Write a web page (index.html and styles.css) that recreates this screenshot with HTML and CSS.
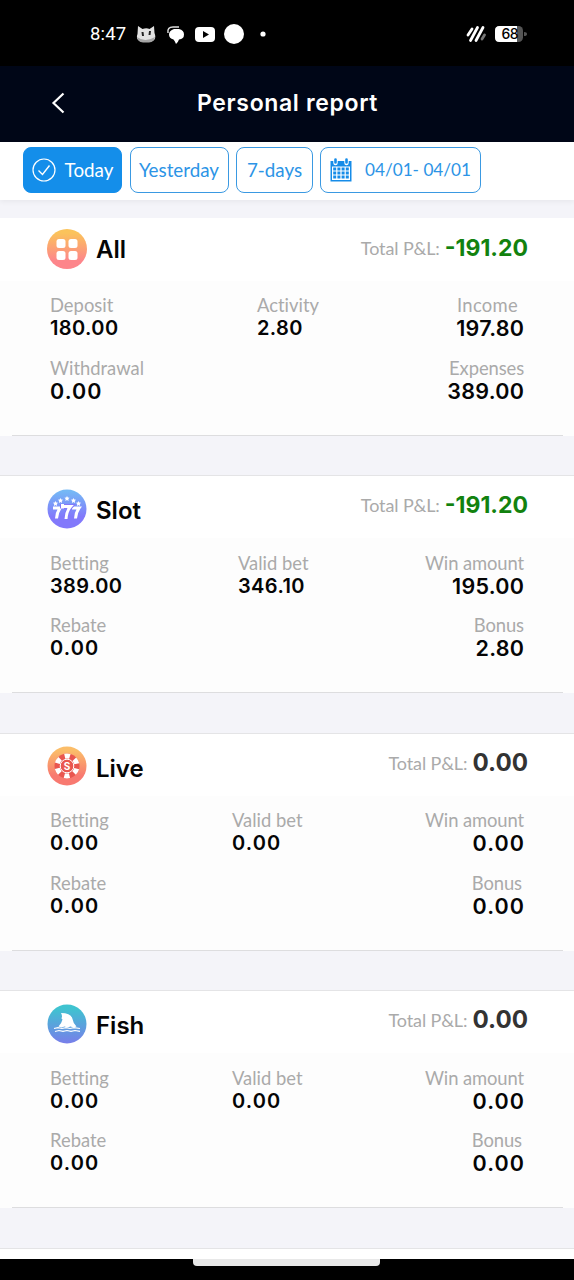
FILE: index.html
```
<!DOCTYPE html>
<html lang="en">
<head>
<meta charset="utf-8">
<title>Personal report</title>
<link rel="stylesheet" href="styles.css">
</head>
<body>
<div class="phone">
  <div class="status">
    <span class="clock">8:47</span>
    <svg class="notices" width="132" height="24" viewBox="0 0 132 24">
      <path d="M2 4l4.500 3q4-1.500 7 0l4.500-3 .5 7q3 8-5 9H7Q-1 19 1.500 12z" fill="#e2e2e2"/>
      <path d="M1 15q8 6 18 0-1 5-6 5.500H7q-5-.5-6-5.500" fill="#a5a5a5"/>
      <path d="M6.500 10l.5 4M14 9l-.5 4" stroke="#222" stroke-width="2"/>
      <path d="M32 11q-1-6 5-6h6" fill="none" stroke="#ddd" stroke-width="1.500"/>
      <path d="M38 7h5q5 1 5 5.500t-5 5q-1 3-3 4.500-1-3-2.500-4.500-4.500-1-4.500-5T38 7" fill="#fff"/>
      <rect x="59" y="5" width="20" height="15" rx="4" fill="#fff"/>
      <path d="M67 9l6 3.500-6 3.500z"/>
      <circle cx="98" cy="12" r="10" fill="#fff"/>
      <circle cx="127" cy="12" r="2.600" fill="#fff"/>
    </svg>
    <svg class="power" width="62" height="20" viewBox="0 0 62 20">
      <g stroke="#fff" stroke-width="2.800" stroke-linecap="round">
        <path d="M2 11l4-6M4.500 16.500l7-13M10 16.500l7-13"/><path d="M16 15l2.500-4" stroke="#777"/>
      </g>
      <rect x="29" y="2" width="28" height="16" rx="4.500" fill="#555"/>
      <path d="M33.500 2H51v16H33.500Q29 18 29 13.500v-7Q29 2 33.500 2" fill="#fff"/>
      <path d="M58 8q3 0 3 2t-3 2z" fill="#555"/>
      <text x="35.500" y="14.800" class="charge">68</text>
    </svg>
  </div>
  <header class="header">
    <svg class="back" width="14" height="22" viewBox="0 0 14 22"><path d="M12.500 1.500L2.500 11l10 9.500" fill="none" stroke="#fff" stroke-width="2.200"/></svg>
    <h1 class="title">Personal report</h1>
  </header>
  <nav class="filters">
    <button class="chip chip-today">
      <svg width="24" height="24" viewBox="0 0 24 24" fill="none" stroke="#fff"><circle cx="12" cy="12" r="11" stroke-width="1.200"/><path d="M6.500 12.500l4 4 7-9" stroke-width="1.400"/></svg>
      <span>Today</span>
    </button>
    <button class="chip chip-yesterday"><span>Yesterday</span></button>
    <button class="chip chip-week"><span>7-days</span></button>
    <button class="chip chip-range">
      <svg width="22" height="24" viewBox="0 0 22 24">
        <path d="M.5 3h21v20.500H.5z" fill="#168ce8"/>
        <path d="M5.500 1v4M16.500 1v4" stroke="#fff" stroke-width="4.400" stroke-linecap="round"/>
        <path d="M5.500 1.500v3M16.500 1.500v3" stroke="#168ce8" stroke-width="2.600" stroke-linecap="round"/>
        <path d="M2 8.500h18V22H2z" fill="#fff"/>
        <path d="M3.200 11h15.600M3.200 15h15.600M3.200 19h15.600" stroke="#168ce8" stroke-width="2.800" stroke-dasharray="3 1.200"/>
      </svg>
      <span>04/01- 04/01</span>
    </button>
  </nav>
  <main class="list">
    <section class="card card-all">
      <div class="head">
        <svg class="badge" width="40" height="40" viewBox="0 0 40 40">
          <defs><linearGradient id="ga" x2="0" y2="1"><stop offset=".1" stop-color="#fbc35b"/><stop offset=".8" stop-color="#fd858b"/></linearGradient></defs>
          <circle cx="20" cy="20" r="20" fill="url(#ga)"/>
          <g fill="#fff"><rect x="9.500" y="10" width="9" height="9" rx="2.500"/><rect x="21.500" y="10" width="9" height="9" rx="2.500"/><rect x="9.500" y="22" width="9" height="9" rx="2.500"/><rect x="21.500" y="22" width="9" height="9" rx="2.500"/></g>
        </svg>
        <h2 class="name">All</h2>
        <p class="total">Total P&amp;L: <b class="sum loss">-191.20</b></p>
      </div>
      <div class="body">
        <div class="cell"><span class="label">Deposit</span><b class="value">180.00</b></div>
        <div class="cell"><span class="label">Activity</span><b class="value">2.80</b></div>
        <div class="cell end"><span class="label label-income">Income</span><b class="value">197.80</b></div>
        <div class="cell wide"><span class="label">Withdrawal</span><b class="value">0.00</b></div>
        <div class="cell end"><span class="label">Expenses</span><b class="value">389.00</b></div>
      </div>
    </section>
    <section class="card card-slot">
      <div class="head">
        <svg class="badge" width="40" height="40" viewBox="0 0 40 40">
          <defs><linearGradient id="gs" x2="0" y2="1"><stop offset=".05" stop-color="#75b8f5"/><stop offset=".7" stop-color="#8279fb"/></linearGradient>
          <path id="star" d="M0-2.600l.8 1.700 1.800.2-1.300 1.300.3 1.900L0 1.600l-1.600.9.300-1.900L-2.600-.7l1.800-.2z"/></defs>
          <circle cx="20" cy="20" r="19.500" fill="url(#gs)"/>
          <g fill="#fff"><use href="#star" x="8.500" y="14.500"/><use href="#star" x="13.500" y="11.500"/><use href="#star" x="20" y="9.500"/><use href="#star" x="26.500" y="11.500"/><use href="#star" x="31.500" y="14.500"/></g>
          <g fill="none" stroke="#fff" stroke-width="3"><path d="M7.500 20.500v-3M7 19h6q-3 4-3.500 10.500M26.500 20.500v-3M26 19h6q-3 4-3.500 10.500"/><path d="M15.500 19.500V15M15 17.500h8.500Q19.500 22 19 30" stroke="#8279fb" stroke-width="5"/><path d="M15.500 19.500V15M15 17.500h8.500Q19.500 22 19 30"/></g>
        </svg>
        <h2 class="name">Slot</h2>
        <p class="total">Total P&amp;L: <b class="sum loss">-191.20</b></p>
      </div>
      <div class="body">
        <div class="cell"><span class="label">Betting</span><b class="value">389.00</b></div>
        <div class="cell"><span class="label">Valid bet</span><b class="value">346.10</b></div>
        <div class="cell end"><span class="label">Win amount</span><b class="value">195.00</b></div>
        <div class="cell wide"><span class="label">Rebate</span><b class="value short">0.00</b></div>
        <div class="cell end"><span class="label">Bonus</span><b class="value">2.80</b></div>
      </div>
    </section>
    <section class="card card-live">
      <div class="head">
        <svg class="badge" width="40" height="40" viewBox="0 0 40 40">
          <defs><linearGradient id="gl" x2="0" y2="1"><stop offset=".1" stop-color="#fbbd69"/><stop offset=".75" stop-color="#f87970"/></linearGradient></defs>
          <circle cx="20" cy="20" r="19.500" fill="url(#gl)"/>
          <circle cx="20" cy="20" r="12.500" fill="#e9564f"/>
          <circle cx="20" cy="20" r="10" fill="none" stroke="#fff" stroke-width="5" stroke-dasharray="5.240 5.232" stroke-dashoffset="-2.600"/>
          <circle cx="20" cy="20" r="6.800" fill="#e9564f" stroke="#fff" stroke-width="1"/>
          <text x="20" y="23.600" class="chip-mark">S</text>
        </svg>
        <h2 class="name">Live</h2>
        <p class="total">Total P&amp;L: <b class="sum">0.00</b></p>
      </div>
      <div class="body">
        <div class="cell"><span class="label">Betting</span><b class="value short">0.00</b></div>
        <div class="cell"><span class="label">Valid bet</span><b class="value short">0.00</b></div>
        <div class="cell end"><span class="label">Win amount</span><b class="value short">0.00</b></div>
        <div class="cell wide"><span class="label">Rebate</span><b class="value short">0.00</b></div>
        <div class="cell end"><span class="label label-bonus">Bonus</span><b class="value short">0.00</b></div>
      </div>
    </section>
    <section class="card card-fish">
      <div class="head">
        <svg class="badge" width="40" height="40" viewBox="0 0 40 40">
          <defs><linearGradient id="gf" x2="0" y2="1"><stop offset=".1" stop-color="#3fc3d0"/><stop offset="1" stop-color="#787eea"/></linearGradient></defs>
          <circle cx="20" cy="20" r="19.500" fill="url(#gf)"/>
          <path d="M14 9q10 0 11.500 6 .5 4 4 7.500l-3 1-3-1-3 1-3-1-3 1-3-1q3-3 4-7l-1-1 .5-2q0-2-1-3.500" fill="#fff"/>
          <path d="M7 24.500l4-.8 4 .8 4-.8 4 .8 4-.8 6 .8M8 27.500l4-1 4 .8 4-.8 4 .8 4-.8 5 .8" fill="none" stroke="#fff" stroke-width="1.200"/>
        </svg>
        <h2 class="name">Fish</h2>
        <p class="total">Total P&amp;L: <b class="sum">0.00</b></p>
      </div>
      <div class="body">
        <div class="cell"><span class="label">Betting</span><b class="value short">0.00</b></div>
        <div class="cell"><span class="label">Valid bet</span><b class="value short">0.00</b></div>
        <div class="cell end"><span class="label">Win amount</span><b class="value short">0.00</b></div>
        <div class="cell wide"><span class="label">Rebate</span><b class="value short">0.00</b></div>
        <div class="cell end"><span class="label label-bonus">Bonus</span><b class="value short">0.00</b></div>
      </div>
    </section>
    <section class="card card-next"></section>
  </main>
  <footer class="gesture"><div class="handle"></div></footer>
</div>
</body>
</html>
```
FILE: styles.css
```
* { box-sizing: border-box; }
body { margin: 0; font-family: Lato, sans-serif; font-variant-ligatures: none; }
h1, h2, p { margin: 0; }
.phone { width: 574px; height: 1280px; display: flex; flex-direction: column; overflow: hidden; background: #f4f4f9; }
.status { height: 66px; flex: none; background: #000; display: flex; align-items: flex-start; padding: 22px 46px 0 90px; }
.clock { color: #fff; font: 400 18.5px/24px Roboto, sans-serif; letter-spacing: .2px; width: 46px; }
.power { margin: 2px 0 0 auto; }
.charge { font: 500 14px Inter, sans-serif; letter-spacing: -.5px; }
.header { height: 75.5px; flex: none; background: #000617; display: flex; align-items: center; padding: 0 0 2px 51px; }
.title { font: 600 23px/30px Inter, sans-serif; color: #fff; letter-spacing: .65px; margin-left: 132px; white-space: nowrap; }
.filters { height: 58px; flex: none; background: #fff; display: flex; padding: 5.5px 0 0 23px; box-shadow: 0 2px 5px #0000000d; position: relative; }
.chip { height: 46px; border: 1.4px solid #3a99e2; border-radius: 8px; background: #fff; color: #2c94e6; font: 400 18.8px/24px Lato, sans-serif; padding: 0; display: flex; align-items: center; justify-content: center; white-space: nowrap; }
.chip-today { width: 99px; background: #148eea; border-color: #148eea; color: #fff; gap: 9px; margin-right: 7.5px; }
.chip-yesterday { width: 99px; margin-right: 7.5px; }
.chip-week { width: 77px; margin-right: 7px; }
.chip-range { width: 161px; gap: 13px; font-size: 17.2px; }
.list { flex: 1; min-height: 0; overflow: hidden; padding-top: 18px; }
.card { height: 218px; margin-bottom: 39.5px; background: #fdfdfd; border-top: 1px solid #e4e4e6; position: relative; }
.card-all { border-top-color: #fff; }
.card::after { content: ""; position: absolute; left: 12px; right: 11px; bottom: 0; height: 1px; background: #dddddf; }
.card-next { height: 20px; background: #fff; }
.card-next::after { display: none; }
.head { height: 62px; background: #fff; display: flex; align-items: flex-start; padding: 12.5px 46px 0 47px; }
.name { font: 600 24px/30px Inter, sans-serif; margin: 7.5px 0 0 9px; color: #050505; }
.total { margin: 1.5px 0 0 auto; font-size: 18px; line-height: 30px; color: #aaa; white-space: nowrap; display: flex; gap: 5px; letter-spacing: -.1px; }
.sum { font: 700 23px/30px Inter, sans-serif; color: #333; letter-spacing: 0; }
.card-live .sum, .card-fish .sum { font-size: 24.2px; }
.loss { color: #12820f; }
.card-all .badge { margin-top: -2px; }
.card-all .name { margin-top: 4px; }
.body { display: grid; grid-template-columns: 182px 1fr auto; row-gap: 16.5px; padding: 13.5px 50px 0; }
.card-all .body { grid-template-columns: 207px 1fr auto; }
.card-slot .body { grid-template-columns: 188px 1fr auto; }
.cell { display: flex; flex-direction: column; align-items: flex-start; white-space: nowrap; }
.wide { grid-column: span 2; }
.end { align-items: flex-end; }
.label { font-size: 18.4px; line-height: 22px; color: #aaa; }
.end .label { letter-spacing: -.1px; }
.end .label-income { margin-right: 6px; letter-spacing: .3px; }
.label-bonus { margin-right: 2px; }
.value { font: 600 20px/24px Inter, sans-serif; color: #050505; letter-spacing: .4px; }
.value.short { letter-spacing: 1.1px; }
.end .value, .card-all .wide .value { font-size: 21.5px; letter-spacing: .3px; }
.end .value { margin-right: -.3px; }
.end .value.short, .card-all .wide .value { letter-spacing: 1.1px; }
.end .value.short { margin-right: -1.1px; }
.chip-mark { font: 700 10px Inter, sans-serif; fill: #fff; text-anchor: middle; }
.gesture { height: 21.5px; flex: none; background: #000; display: flex; padding-left: 193px; }
.handle { width: 187px; height: 7.5px; background: #e8e8e8; border-radius: 0 0 4px 4px; }
```
